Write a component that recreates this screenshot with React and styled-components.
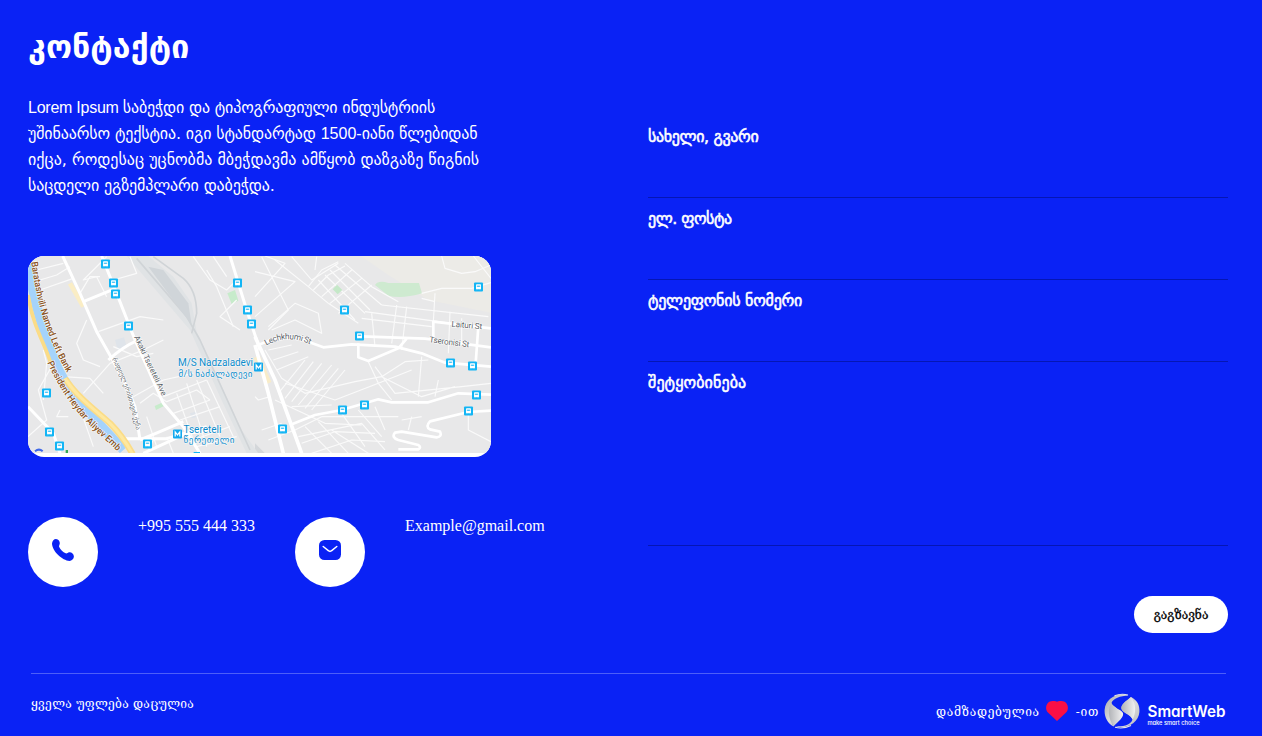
import React from "react";
import styled, { createGlobalStyle } from "styled-components";

const Global = createGlobalStyle`
  * { box-sizing: border-box; }
  html, body { margin: 0; padding: 0; background: #0a22f5; }
  body { overflow: hidden; }
`;

const georgian = `"DejaVu Sans", sans-serif`;
const georgianSerif = `"DejaVu Serif", serif`;

const Page = styled.main`
  width: 1262px;
  height: 736px;
  padding: 0 34px 0 28px;
  background: #0a22f5;
  color: #fff;
  display: flex;
  flex-direction: column;
`;
const Columns = styled.div`
  display: grid;
  grid-template-columns: 620px 580px;
  height: 673px;
`;
const Info = styled.section`
  display: flex;
  flex-direction: column;
  padding-top: 27px;
`;
const Title = styled.h1`
  margin: 0 0 28px;
  height: 40px;
  font: bold 32px/40px ${georgian};
  letter-spacing: 0.1px;
  white-space: nowrap;
`;
const Lead = styled.p`
  margin: 0 0 57px;
  font: 16px/26px ${georgian};
`;
const Line = styled.span`
  display: block;
  height: 26px;
  white-space: nowrap;
  letter-spacing: ${(p) => p.$track || 0}px;
`;
const Latin = styled.span`
  font: 16px/26px "Liberation Sans", Arial, sans-serif;
  letter-spacing: ${(p) => p.$track || 0}px;
`;
const MapCard = styled.div`
  width: 463px;
  height: 201px;
  border-radius: 16px;
  background: #fff;
  overflow: hidden;
  svg { display: block; }
`;
const Contacts = styled.div`
  display: flex;
  gap: 40px;
  margin-top: 60px;
`;
const Contact = styled.div`
  display: flex;
  gap: 40px;
  font: 16px/18px "Liberation Serif", "Times New Roman", serif;
  white-space: nowrap;
`;
const Disc = styled.span`
  width: 70px;
  height: 70px;
  border-radius: 50%;
  background: #fff;
  display: grid;
  place-items: center;
  padding-bottom: 4px;
`;
const Form = styled.form`
  padding-top: 116px;
  display: flex;
  flex-direction: column;
`;
const Field = styled.label`
  display: block;
  height: ${(p) => p.$height || 82}px;
  padding-top: 10px;
  border-bottom: 1px solid #0516b4;
  font: 16px/22px ${georgian};
  -webkit-text-stroke: 0.55px #fff;
  letter-spacing: ${(p) => p.$track || 0}px;
  white-space: nowrap;
`;
const Submit = styled.button`
  align-self: flex-end;
  margin-top: 50px;
  width: 94px;
  height: 37px;
  padding: 1px 0 0;
  border: 0;
  border-radius: 19px;
  background: #fff;
  color: #000;
  font: 12px/36px ${georgianSerif};
  -webkit-text-stroke: 0.3px #000;
`;
const Footer = styled.footer`
  width: 1195px;
  margin-left: 3px;
  border-top: 1px solid #4d5ff8;
  display: flex;
  justify-content: space-between;
  font: 12px/18px ${georgianSerif};
  white-space: nowrap;
`;
const Rights = styled.span`
  padding-top: 21px;
  letter-spacing: 0.3px;
`;
const Credit = styled.div`
  display: flex;
  align-items: center;
  height: 37px;
  margin-top: 19px;
  letter-spacing: 0.7px;
`;
const Heart = styled.svg`
  margin: 0 8px 1px 6px;
`;
const Logo = styled.svg`
  margin-left: 5px;
  letter-spacing: 0;
`;

const stops = [
  [105, 264], [113, 283], [115, 294], [128, 326], [46, 393], [49, 432], [59, 446], [147, 444],
  [237, 283], [247, 310], [251, 324], [478, 287], [344, 310], [359, 336], [450, 363], [472, 366],
  [476, 395], [468, 411], [364, 405], [342, 410], [282, 429],
];
const metros = [[258, 367], [177, 434]];

const whiteLeft = [
  "M128 18 L180 130 L230 245 L275 325 L320 410 L345 470 L360 570",
  "M245 18 L290 130 L345 270 L430 460 L490 530 L540 610",
  "M190 155 L280 118", "M265 330 Q310 290 345 275", "M630 18 L680 180 L720 300",
  "M360 570 L420 545 L490 515", "M310 566 L440 566 L560 530", "M370 610 L500 550 L590 540",
  "M24 470 L100 550 L120 610",
];
const thinLeft = [
  "M60 120 L160 85", "M235 245 L360 200 L430 210", "M190 430 L270 340 L370 300 L430 270",
  "M50 60 L130 40 M60 90 L110 75 L150 50", "M260 20 L190 90 L230 80 L260 140",
  "M180 130 L210 80 L240 80 M330 20 L350 70 L280 90", "M280 290 L350 320 L400 310",
  "M200 210 L170 280 L190 330 L240 350", "M130 380 L210 385 L250 430 M340 440 L430 390 L520 370",
  "M360 460 L400 430 L440 455 L530 420 L570 450", "M430 440 L560 390 M460 490 L570 450 M480 510 L600 470",
  "M500 400 L560 590 M530 390 L600 560 M560 390 L640 560 M470 430 L520 570",
  "M520 570 L630 530 M530 590 L650 560 M70 300 L80 340 L70 450", "M100 340 L55 420 L80 510 L24 560",
  "M120 480 L110 500 L145 500 M185 490 L220 590 M380 500 L410 590",
  "M400 570 L380 610 M440 560 L460 610 M560 60 L590 110 L640 230",
  "M520 20 L570 90 L620 120 L650 90 M580 20 L620 80 M650 150 L600 200 L660 240",
];
const whiteRight = [
  "M0 260 L60 390 L140 610", "M0 285 L40 430 L85 610", "M10 285 L60 265 L130 265 L205 292 L290 283 L420 290 L500 310 L570 338 L708 350",
  "M320 259 L510 266 L708 292", "M310 280 L310 322 L340 333 L430 295 L455 266", "M535 262 L535 215 L708 235 M670 230 L662 340",
  "M105 525 L180 495 L260 480 L370 448 L410 457 L520 457 L610 430 L708 434",
  "M708 482 L640 486 L525 514 Q510 530 525 538 L555 545 Q562 560 545 562 L440 545 L420 548 Q408 562 430 570 L490 585 Q500 592 490 598 L430 598",
];
const thinRight = [
  "M0 65 L120 95 L0 200 M0 140 L90 40 L30 18 M20 20 L100 180 L40 240",
  "M60 30 L160 110 L220 160 M110 20 L170 90 L250 40 M180 60 L185 20",
  "M160 110 L200 60 L250 35 M175 120 L220 75 L270 48 M190 90 L300 210 M210 75 L330 190 M225 60 L345 180 M240 45 L380 165",
  "M200 140 L290 60 M225 160 L320 85 M250 190 L350 105 M220 160 L310 220 M270 40 L350 110 L430 155",
  "M330 185 L700 235 M320 205 L530 230 M350 190 L360 290 M455 170 L440 300 M425 165 L410 280",
  "M380 165 L700 200 M540 130 L535 215 M585 185 L580 310 M620 205 L620 280",
  "M30 300 L80 385 L150 430 L300 395 L380 380 L450 335 L520 330", "M40 230 L120 160 L190 190 L200 250 L120 210 L50 240",
  "M70 430 L150 330 M90 445 L175 335 M110 455 L200 340 M130 465 L230 345 M150 475 L250 355 M170 480 L270 360",
  "M40 300 L110 285 M55 330 L130 305 M65 360 L160 320 M90 400 L240 450 L370 400 L470 360",
  "M340 335 L370 400 L410 450 M380 380 L500 440 L600 410 M500 320 L490 440 M360 350 L420 430 L620 410 L708 400",
  "M540 440 L550 390 M110 470 L230 465 M60 450 L210 520 L320 525 M120 540 L200 500 L430 500 M130 560 L320 520 L390 600",
  "M150 530 L230 610 M190 515 L280 610 M230 540 L340 610 M140 580 L240 545 L360 550 M170 610 L290 570 L390 575",
  "M260 490 L330 590 M310 480 L380 560 M360 470 L390 540 M0 440 L10 450 L45 440 M20 540 L80 520 M40 570 L120 540",
  "M560 18 L570 55 L620 70 L660 65 L708 45 M655 18 L708 85 M500 145 L540 155 M500 130 L560 115 L650 115 L708 98",
  "M640 490 L640 540 L708 575 M470 500 L460 540 M440 510 L500 500",
];

function CityMap() {
  return (
    <svg width="463" height="197" viewBox="0 0 463 197">
      <defs>
        <path id="bank" d="M34 36 C45 120 60 190 90 260 C105 305 125 340 150 384" />
        <path id="emb" d="M82 338 C115 410 160 480 215 532 C245 562 268 578 298 610" />
        <path id="akaki" d="M342 262 L428 442" />
        <path id="eristavi" d="M275 328 Q320 400 350 550" />
        <path id="lech" d="M34 287 Q95 250 168 284" />
      </defs>
      <rect width="463" height="197" fill="#e8e8e9" />
      <g transform="translate(227 -6) scale(.33333)" fill="none" strokeLinejoin="round">
        <path d="M318 18 L400 75 L520 150 L708 188 V18Z" fill="#ecebe7" />
        <path d="M360 105 Q370 90 400 99 L492 99 L501 130 Q440 148 400 137 Z" fill="#ceead0" />
        <path d="M5 320 L40 400" stroke="#f8ecc9" strokeWidth="20" />
        <path d="M0 580 L30 610 H0Z" fill="#d4d7da" />
        {thinRight.map((d) => <path key={d} d={d} stroke="#fafafa" strokeWidth="3.4" />)}
        <path d="M246 104 L262 120 L248 133 L233 118Z" fill="#c5e8c8" />
        {whiteRight.map((d, i) => <path key={d} d={d} stroke="#fff" strokeWidth={i < 2 ? 11 : 8} />)}
      </g>
      <g transform="translate(-8 -6) scale(.33333)" fill="none" strokeLinejoin="round">
        <path d="M320 18 L385 18 L460 80 L515 160 L530 245 L610 420 L665 540 L715 610 L680 610 L600 440 L510 240 Z" fill="#e0e3e5" />
        <path d="M350 25 L500 200 L540 270 L690 600 M400 20 L490 85 Q530 120 530 190 L515 250" stroke="#d0d4d7" strokeWidth="5" />
        <path d="M385 50 L430 60 L505 160 L515 225Z" fill="#d0d5d9" />
        <path d="M622 130 L645 120 L655 152 L635 162Z" fill="#c7ebcb" />
        <path d="M404 468 L425 458 L432 468 L408 480Z" fill="#c7ebcb" />
        <path d="M285 270 L312 262 L320 290 L293 300Z M510 490 L530 484 L534 500 L515 505Z" fill="#dfe4ea" />
        <path d="M150 100 L190 170" stroke="#faedc5" strokeWidth="14" />
        {thinLeft.map((d) => <path key={d} d={d} stroke="#fafafa" strokeWidth="3.6" />)}
        {whiteLeft.map((d) => <path key={d} d={d} stroke="#fff" strokeWidth="9" />)}
        <path d="M24 40 C38 130 65 240 105 335 C145 435 220 500 310 600" stroke="#a5d3fb" strokeWidth="28" />
        <path d="M24 135 C40 235 75 280 92 340" stroke="#fbdc87" strokeWidth="11" />
        <path d="M135 385 C170 440 225 480 270 520 C300 550 320 580 338 612" stroke="#fbdc87" strokeWidth="19" />
        <path d="M135 385 C170 440 225 480 270 520 C300 550 320 580 338 612" stroke="#fee89f" strokeWidth="9" />
        <path d="M45 604 Q57 594 68 604" stroke="#3f68e8" strokeWidth="6" />
        <path d="M137 600 H144 V610 H137Z" fill="#34a853" />
        <path d="M521 606 H540 V610 H521Z" fill="#12b5f5" />
      </g>
      {stops.map(([x, y]) => (
        <g key={`${x}-${y}`} transform={`translate(${x - 32} ${y - 260.5})`}>
          <rect width="9" height="9" rx="1" fill="#12b5f5" />
          <rect x="2" y="1.8" width="5" height="5" rx=".8" fill="#fff" />
          <path d="M2.8 3h3.4v1.4H2.8Z M2.3 7.2h1M5.7 7.2h1" fill="#12b5f5" stroke="#fff" strokeWidth=".4" />
        </g>
      ))}
      {metros.map(([x, y]) => (
        <g key={x} transform={`translate(${x - 32} ${y - 260.5})`}>
          <rect width="9" height="9" rx="1" fill="#12a9ee" />
          <path d="M2.2 7V2.4L4.5 5.4L6.8 2.4V7" fill="none" stroke="#fff" strokeWidth="1.2" />
        </g>
      ))}
      <g stroke="#fff" strokeOpacity=".8" strokeWidth="1.4" strokeLinejoin="round" style={{ paintOrder: "stroke" }} fontFamily="Roboto, 'DejaVu Sans', sans-serif">
        <g transform="translate(-8 -6) scale(.33333)" strokeWidth="4">
          <g fontSize="28" fontWeight="500" fill="#8a5220">
            <text><textPath href="#bank" textLength="352" lengthAdjust="spacingAndGlyphs">Baratashvili Named Left Bank</textPath></text>
            <text><textPath href="#emb" textLength="342" lengthAdjust="spacingAndGlyphs">President Heydar Aliyev Emb</textPath></text>
          </g>
          <g fontSize="24" fill="#5f666b">
            <text><textPath href="#akaki" textLength="196">Akaki Tsereteli Ave</textPath></text>
            <text fontSize="20"><textPath href="#eristavi" textLength="226" lengthAdjust="spacingAndGlyphs">რაფიელ ერისთავის ქუჩა</textPath></text>
          </g>
        </g>
        <g transform="translate(227 -6) scale(.33333)" strokeWidth="4" fill="#5f666b" fontSize="25">
          <text><textPath href="#lech" textLength="137">Lechkhumi St</textPath></text>
          <text transform="translate(589 230) rotate(5)" textLength="92">Laituri St</text>
          <text transform="translate(522 277) rotate(7)" textLength="121">Tseronisi St</text>
        </g>
        <g fill="#0d8ccb" fontSize="10" strokeWidth="1">
          <text x="150" y="110" textLength="75">M/S Nadzaladevi</text>
          <text x="150.500" y="120.500" fontSize="9" textLength="74">მ/ს ნაძალადევი</text>
          <text x="155.500" y="176.500" textLength="38">Tsereteli</text>
          <text x="155.500" y="187" fontSize="9" textLength="51">წერეთელი</text>
        </g>
      </g>
    </svg>
  );
}

const PhoneIcon = () => (
  <svg width="24" height="24" viewBox="0 0 24 24">
    <path d="M1 5.500C1.200 2.700 3.200 .9 5 1C7.600 1.200 9 3.500 8.800 5.400C8.600 7.200 7.600 7.600 8.200 8.900C9.500 11.800 12 14.200 14.600 15.300C16 15.900 16.600 14.600 18.200 14.300C20.500 14 22.800 16 22.900 18.400C22.900 20.800 20.700 22.700 18.500 22.900C11.500 22.600 1.300 13.500 1 5.500Z" fill="#0a22f5" />
  </svg>
);
const MailIcon = () => (
  <svg width="22" height="20" viewBox="0 0 22 20">
    <rect width="22" height="20" rx="5.500" fill="#0a22f5" />
    <path d="M4.200 6.500L9.600 10.800Q11 12 12.400 10.800L17.800 6.500" fill="none" stroke="#fff" strokeWidth="1.500" strokeLinecap="round" />
  </svg>
);

function SmartWebLogo() {
  return (
    <Logo width="122" height="37" viewBox="0 0 122 37">
      <defs>
        <linearGradient id="silverA" x1="0" y1="0" x2="1" y2="1">
          <stop offset="0" stopColor="#a4a6ab" /><stop offset=".5" stopColor="#dcdcdd" /><stop offset="1" stopColor="#b8b8bb" />
        </linearGradient>
        <linearGradient id="silverB" x1="0" y1="0" x2="1" y2="0">
          <stop offset="0" stopColor="#b2b4b8" /><stop offset="1" stopColor="#f2f2f2" />
        </linearGradient>
      </defs>
      <path d="M24.500 2.600C13 -1 1.500 5.500 .6 17C.3 24 3.500 30 9.500 33.500C8 31 8 28 10 25C11.500 22 14 19.500 13.500 17C12.500 13.500 8 13 7.500 10C9 5.500 16 3 24.500 2.600Z" fill="url(#silverA)" />
      <path d="M7.500 10C3.500 15 4 25 9.500 33.500C14.500 28 20 24.500 19 20C17.500 16 8.500 15.500 7.500 10Z" fill="url(#silverB)" />
      <path d="M27 4C33 7 36 12 35.400 19C34.500 30 22 37 11.500 33.200C19 33.800 27 32 28.500 26.500C27.500 22 19 20 17.500 16C16.500 11.500 22.500 8 27 4Z" fill="url(#silverA)" />
      <path d="M27 4C32 10 32.500 20 28.500 26.500C27.500 22 19 20 17.500 16C16.500 11.500 22.500 8 27 4Z" fill="url(#silverB)" />
      <path d="M11 34.200Q19 36.300 27 32.500M10.500 2.800Q17 .2 24 2" fill="none" stroke="#e6e6e8" strokeWidth="1.100" />
      <text x="43.500" y="24.300" fill="#fff" fontFamily="Inter, sans-serif" fontWeight="600" fontSize="15.500" textLength="78" lengthAdjust="spacingAndGlyphs" style={{ fontFeatureSettings: '"cv11"' }}>SmartWeb</text>
      <text x="43.500" y="31.700" fill="#fff" fontFamily="Inter, sans-serif" fontWeight="500" fontSize="5.500" textLength="52" lengthAdjust="spacingAndGlyphs" style={{ fontFeatureSettings: '"cv11"' }}>make smart choice</text>
    </Logo>
  );
}

export default function App() {
  return (
    <Page>
      <Global />
      <Columns>
        <Info>
          <Title>კონტაქტი</Title>
          <Lead>
            <Line $track={-0.18}><Latin $track={-0.25}>Lorem Ipsum </Latin>საბეჭდი და ტიპოგრაფიული ინდუსტრიის</Line>
            <Line $track={-0.14}>უშინაარსო ტექსტია. იგი სტანდარტად <Latin>1500-</Latin>იანი წლებიდან</Line>
            <Line>იქცა, როდესაც უცნობმა მბეჭდავმა ამწყობ დაზგაზე წიგნის</Line>
            <Line $track={-0.15}>საცდელი ეგზემპლარი დაბეჭდა.</Line>
          </Lead>
          <MapCard><CityMap /></MapCard>
          <Contacts>
            <Contact><Disc><PhoneIcon /></Disc>+995 555 444 333</Contact>
            <Contact><Disc><MailIcon /></Disc>Example@gmail.com</Contact>
          </Contacts>
        </Info>
        <Form>
          <Field $track={-0.36}>სახელი, გვარი</Field>
          <Field $track={-0.5}>ელ. ფოსტა</Field>
          <Field $track={-0.25}>ტელეფონის ნომერი</Field>
          <Field $track={0.1} $height={184}>შეტყობინება</Field>
          <Submit type="button">გაგზავნა</Submit>
        </Form>
      </Columns>
      <Footer>
        <Rights>ყველა უფლება დაცულია</Rights>
        <Credit>
          <span>დამზადებულია</span>
          <Heart width="22" height="20" viewBox="0 0 22 20">
            <path d="M11 20L2.200 11.800C-1.600 8 .2 1.800 3.800 .4C7 -.3 9.500 -.1 11 .7C12.500 -.1 15 -.3 18.200 .4C21.800 1.800 23.600 8 19.800 11.800Z" fill="#fa0f45" />
          </Heart>
          <span>-ით</span>
          <SmartWebLogo />
        </Credit>
      </Footer>
    </Page>
  );
}
